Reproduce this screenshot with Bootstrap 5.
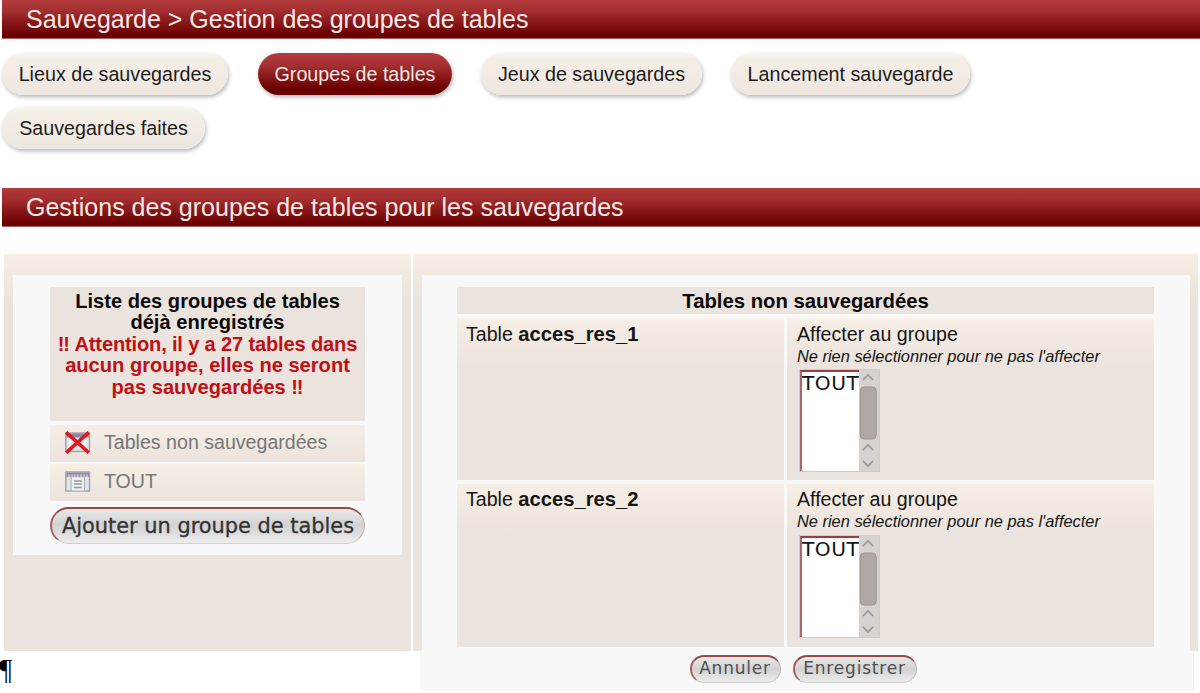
<!DOCTYPE html>
<html lang="fr">
<head>
<meta charset="utf-8">
<title>Gestion des groupes de tables</title>
<link href="https://cdn.jsdelivr.net/npm/bootstrap@5.3.0/dist/css/bootstrap.min.css" rel="stylesheet">
<style>
body{font-family:"Liberation Sans",Arial,sans-serif;font-size:19.6px;line-height:22px;color:#151515;background:#fff;width:1200px;height:693px;overflow:hidden}
.titlebar{height:38.5px;margin-left:2px;padding:1px 0 0 24px;background:linear-gradient(#b23a3b,#a42f30 28%,#6b0000 92%,#6b0000);color:#f8e9e9;font-size:25px;line-height:37px;white-space:nowrap;border-bottom:1px solid #a96565}
.tabs{padding:14.5px 0 0 2px;column-gap:29px;row-gap:12px;height:149.5px}
.tab{height:42px;border-radius:21px;line-height:42px;font-size:19.7px;color:#1c1c1c;text-decoration:none;white-space:nowrap;text-align:center;background:linear-gradient(#f7f6f2,#f3efe2 12%,#f3ece5 38%,#eee7e0);box-shadow:1px 2px 4px rgba(0,0,0,.3)}
.tab.on{background:linear-gradient(#b53b3c,#a43031 30%,#6b0000 85%);color:#f6e6e6}
.w1{width:226px;margin-right:1px}.w2{width:194px}.w3{width:221px}.w4{width:239px}.w5{width:203px}
.panels{margin:27px 2px 0 4px;gap:2px;height:397px}
.panel-bg{background:linear-gradient(#f7efe5,#f1e9df 22px,#ebe3dd 46px)}
.left-side{width:407px;padding:21px 9px 0}
.right-side{width:785px;padding:21px 8px 0 9px}
.sheet{background:#f8f8f8}
.left-side .sheet{height:280px;padding:12px 37px 0}
.right-side .sheet{height:416px;padding:12px 35px 0;position:relative}
.right-side .sheet::before{content:"";position:absolute;left:-2px;right:-4px;top:376px;bottom:0;background:#f8f8f8;border-right:1px solid #ebebeb}
.headcell{background:#ebe3dd;font-weight:700;color:#0a0a0a;text-align:center}
.intro{height:134px;padding:4px 0 0;line-height:21.5px;font-size:20.1px;white-space:nowrap}
.warn{color:#c01014}
.tight{letter-spacing:-.17px}
.cellbg{background:linear-gradient(#f7efe5,#f1eae2 40%,#ebe3dd)}
.entry{height:37px;padding:0 0 2px 15px;gap:13px;color:#777}
.grid-t{display:grid;grid-template-columns:327px 367px;gap:4px 3px;position:relative}
.grid-t .headcell{grid-column:1/3;height:27px;line-height:28px;font-size:20.3px}
.tcell{height:162px;padding:5px 10px 0;background:linear-gradient(#f7efe5,#ebe3dd 48px);white-space:nowrap}
.name-cell{padding-left:9px}
.name-cell b{font-size:20.2px}
.tcell.low{height:163px;padding-top:4px}
.low .lbox{margin-top:3px}
.hint{font-size:16.4px;font-style:italic}
.lbox{width:81px;height:103px;border:1px solid #cfcbc8;margin:2px 0 0 2px;background:#d6d2cf}
.opts{width:59px;background:#fff;border-top:2px solid #983c40;border-left:2px solid #b06468;font:20.2px/22px "DejaVu Sans",sans-serif;letter-spacing:.5px;overflow:hidden}
.pillbtn{display:block;border:1px solid #b5b5b5;border-top:2px solid #954848;border-left:2px solid #ac5c5c;border-bottom-color:#d0d0d0;background:linear-gradient(#e8e8e8,#d2d2d2 48%,#d8d8d8 60%,#ececec);border-radius:20px;color:#333;white-space:nowrap;padding:0;text-align:center}
.add{width:315px;height:37px;margin-top:6px;font:20.9px/32px "DejaVu Sans",sans-serif;-webkit-text-stroke:.3px #333}
.foot{gap:12px;padding-left:233px;margin-top:8px;position:relative}
.foot .pillbtn{height:28px;font:17px/22px "DejaVu Sans",sans-serif;letter-spacing:.8px;color:#505050;padding:0 2px 2px 0}
.pil{font:29px/30px "Liberation Serif",serif;color:#000;margin:3px 0 0 -1px}
</style>
</head>
<body>
<h1 class="titlebar mb-0 fw-normal">Sauvegarde &gt; Gestion des groupes de tables</h1>
<nav class="tabs d-flex flex-wrap align-content-start">
<a class="tab w1" href="#">Lieux de sauvegardes</a>
<a class="tab on w2" href="#">Groupes de tables</a>
<a class="tab w3" href="#">Jeux de sauvegardes</a>
<a class="tab w4" href="#">Lancement sauvegarde</a>
<a class="tab w5" href="#">Sauvegardes faites</a>
</nav>
<h2 class="titlebar mb-0 fw-normal">Gestions des groupes de tables pour les sauvegardes</h2>
<main class="panels d-flex">
<section class="panel-bg left-side">
<div class="sheet">
<div class="headcell intro">Liste des groupes de tables<br>déjà enregistrés<br><span class="warn"><span class="tight">‼ Attention, il y a 27 tables dans</span><br>aucun groupe, elles ne seront<br>pas sauvegardées ‼</span></div>
<div class="entry cellbg d-flex align-items-center mt-1">
<svg width="26" height="24" viewBox="0 0 26 24"><rect x=".8" y="3" width="23.7" height="18.5" fill="#dfe5ea" stroke="#a2a2a2" stroke-width="1.4"/><path d="M1.5 5.5h22.5" stroke="#8d86a0" stroke-width="4"/><path d="M5 8v12M20 8v12" stroke="#fff" stroke-width="2"/><path d="M2.5 3.500 22.500 21.500M22.500 3.500 2.500 21.500" stroke="#df191b" stroke-width="3.6" stroke-linecap="square"/></svg>
<span>Tables non sauvegardées</span></div>
<div class="entry cellbg d-flex align-items-center" style="margin-top:2px">
<svg width="26" height="24" viewBox="0 0 26 24"><rect x=".8" y="3" width="23.7" height="19" fill="#dfe5ea" stroke="#a2a2a2" stroke-width="1.4"/><path d="M1.5 6h22.5" stroke="#9b93ab" stroke-width="4" stroke-dasharray="2 1"/><path d="M1.5 4.5h22.5" stroke="#8d86a0" stroke-width="1.5"/><path d="M6 8v13M19.5 8v13" stroke="#a5adb4"/><path d="M7 9h12v12.5H7z" fill="#eef0f2"/><path d="M9 12h8M9 15h8M9 18.5h8" stroke="#999ca0" stroke-width="1.3"/></svg>
<span>TOUT</span></div>
<button class="pillbtn add">Ajouter un groupe de tables</button>
</div>
</section>
<section class="panel-bg right-side">
<div class="sheet">
<div class="grid-t">
<div class="headcell">Tables non sauvegardées</div>
<div class="tcell name-cell">Table <b>acces_res_1</b></div>
<div class="tcell"><div>Affecter au groupe</div><div class="hint">Ne rien sélectionner pour ne pas l'affecter</div>
<div class="lbox d-flex"><div class="opts">TOUT</div><svg width="20" height="101" viewBox="0 0 20 101" fill="none" stroke="#999594" stroke-width="1.7"><path d="m4 10 5-5 5 5M4 80l5-5 5 5M4 91l5 5 5-5"/><rect x="1.2" y="17" width="16" height="52" rx="4" fill="#b0a8a4" stroke="#999190" stroke-width="1"/></svg></div></div>
<div class="tcell low name-cell">Table <b>acces_res_2</b></div>
<div class="tcell low"><div>Affecter au groupe</div><div class="hint">Ne rien sélectionner pour ne pas l'affecter</div>
<div class="lbox d-flex"><div class="opts">TOUT</div><svg width="20" height="101" viewBox="0 0 20 101" fill="none" stroke="#999594" stroke-width="1.7"><path d="m4 10 5-5 5 5M4 80l5-5 5 5M4 91l5 5 5-5"/><rect x="1.2" y="17" width="16" height="52" rx="4" fill="#b0a8a4" stroke="#999190" stroke-width="1"/></svg></div></div>
</div>
<div class="foot d-flex"><button class="pillbtn" style="width:91px">Annuler</button><button class="pillbtn" style="width:124px">Enregistrer</button></div>
</div>
</section>
</main>
<div class="pil">¶</div>
<script src="https://cdn.jsdelivr.net/npm/bootstrap@5.3.0/dist/js/bootstrap.bundle.min.js"></script>
</body>
</html>
